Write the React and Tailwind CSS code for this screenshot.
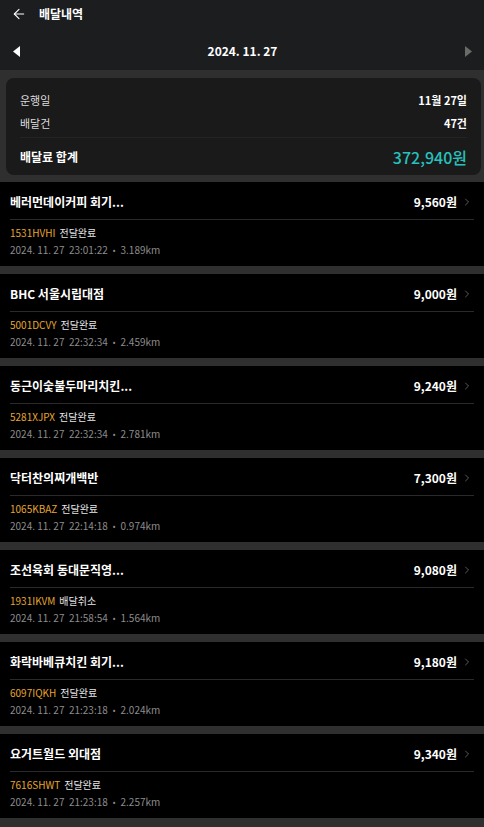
import { ArrowLeft, ChevronRight } from 'lucide-react'

const ITEMS = [
  { name: '베러먼데이커피 회기...', fee: '9,560원', code: '1531HVHI', status: '전달완료', time: '23:01:22', dist: '3.189km' },
  { name: 'BHC 서울시립대점', fee: '9,000원', code: '5001DCVY', status: '전달완료', time: '22:32:34', dist: '2.459km' },
  { name: '동근이숯불두마리치킨...', fee: '9,240원', code: '5281XJPX', status: '전달완료', time: '22:32:34', dist: '2.781km' },
  { name: '닥터찬의찌개백반', fee: '7,300원', code: '1065KBAZ', status: '전달완료', time: '22:14:18', dist: '0.974km' },
  { name: '조선육회 동대문직영...', fee: '9,080원', code: '1931IKVM', status: '배달취소', time: '21:58:54', dist: '1.564km' },
  { name: '화락바베큐치킨 회기...', fee: '9,180원', code: '6097IQKH', status: '전달완료', time: '21:23:18', dist: '2.024km' },
  { name: '요거트월드 외대점', fee: '9,340원', code: '7616SHWT', status: '전달완료', time: '21:23:18', dist: '2.257km' },
]

function DeliveryItem({ item }) {
  return (
    <div className="bg-black">
      {/* title row */}
      <div className="flex h-[37px] items-center justify-between pt-[3px] pl-[10px] pr-[11px]">
        <span className="text-[12px] font-bold text-white">{item.name}</span>
        <span className="flex items-center gap-[4px]">
          <span className="text-[12px] font-bold text-white">{item.fee}</span>
          <ChevronRight size={12} strokeWidth={1.3} className="text-[#8a8a8a]" />
        </span>
      </div>
      <div className="mx-[10px] border-t border-[#2a2a2a]" />
      <div className="px-[10px] pt-[3px] pb-[8px]">
        <div className="flex h-[18px] items-center gap-[4px] text-[10px]">
          <span className="text-[#e5a530]">{item.code}</span>
          <span className="text-[#e8e8e8]">{item.status}</span>
        </div>
        <div className="flex h-[17px] items-center text-[10px] text-[#8c8c8c]">
          <span className="whitespace-pre">2024. 11. 27  {item.time}</span>
          <span className="mx-[5px] text-[8px]">•</span>
          <span>{item.dist}</span>
        </div>
      </div>
    </div>
  )
}

export default function App() {
  return (
    <div className="min-h-[827px] bg-[#2f2f2f] font-['Noto_Sans_CJK_KR','Noto_Sans',sans-serif]">
      {/* header */}
      <div className="bg-[#1c1d1f]">
        <div className="flex h-[28px] items-center gap-[12px] pl-[11px]">
          <ArrowLeft size={16} strokeWidth={1.6} className="text-white" />
          <span className="text-[12px] font-bold text-white">배달내역</span>
        </div>
        <div className="flex h-[42px] items-center justify-between pt-[4px] pl-[13px] pr-[12px]">
          <svg width="7" height="11" viewBox="0 0 7 11"><path d="M7 0 L0 5.5 L7 11 Z" fill="#ffffff" /></svg>
          <span className="text-[12px] font-bold text-white">2024. 11. 27</span>
          <svg width="7" height="11" viewBox="0 0 7 11"><path d="M0 0 L7 5.5 L0 11 Z" fill="#6a6a6a" /></svg>
        </div>
      </div>

      {/* summary */}
      <div className="pt-[8px] pb-[7px] pl-[6px] pr-[3px]">
        <div className="rounded-[8px] bg-[#1a1a1a] px-[14px] pt-[11px]">
          <div className="flex h-[23px] items-center justify-between text-[11px]">
            <span className="text-[#dcdcdc]">운행일</span>
            <span className="font-bold text-white">11월 27일</span>
          </div>
          <div className="flex h-[23px] items-center justify-between text-[11px]">
            <span className="text-[#dcdcdc]">배달건</span>
            <span className="font-bold text-white">47건</span>
          </div>
          <div className="mt-[2px] border-t border-[#242424]" />
          <div className="flex h-[37px] items-center justify-between">
            <span className="text-[12px] font-bold text-white">배달료 합계</span>
            <span className="text-[16px] font-medium text-[#27c1bd]">372,940원</span>
          </div>
        </div>
      </div>

      {/* list */}
      <div className="flex flex-col gap-[8px] pb-[9px]">
        {ITEMS.map((item) => (
          <DeliveryItem key={item.code} item={item} />
        ))}
      </div>
    </div>
  )
}
